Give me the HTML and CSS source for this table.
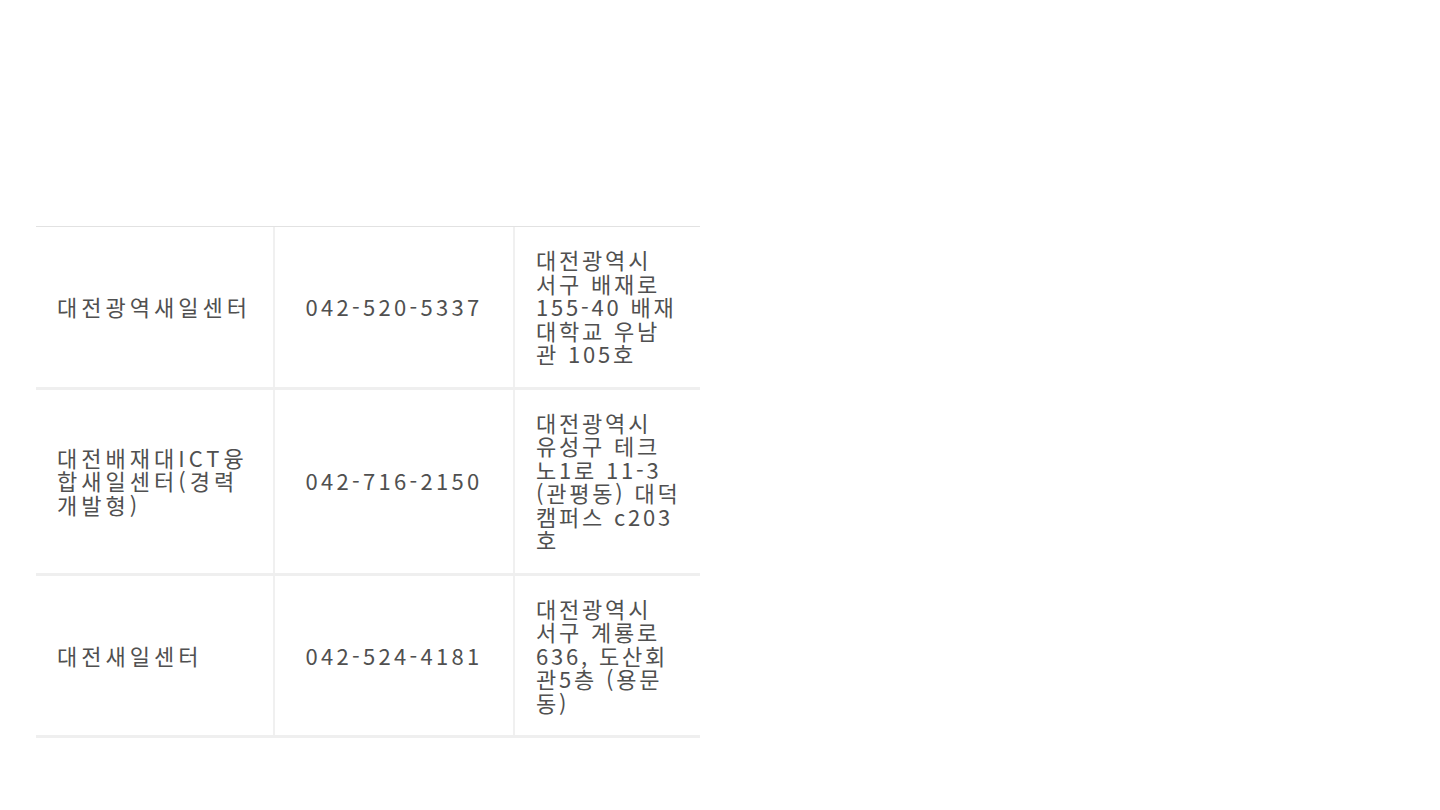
FILE: index.html
```html
<!DOCTYPE html>
<html lang="ko">
<head>
<meta charset="utf-8">
<title>새일센터 안내</title>
<link rel="stylesheet" href="styles.css">
</head>
<body>
<div class="page">
  <div class="center-table">
    <div class="row">
      <div class="cell name">대전광역새일센터</div>
      <div class="cell tel">042-520-5337</div>
      <div class="cell addr">대전광역시<br>서구 배재로<br>155-40 배재<br>대학교 우남<br>관 105호</div>
    </div>
    <div class="row">
      <div class="cell name">대전배재대ICT융<br>합새일센터(경력<br>개발형)</div>
      <div class="cell tel">042-716-2150</div>
      <div class="cell addr">대전광역시<br>유성구 테크<br>노1로 11-3<br>(관평동) 대덕<br>캠퍼스 c203<br>호</div>
    </div>
    <div class="row">
      <div class="cell name">대전새일센터</div>
      <div class="cell tel">042-524-4181</div>
      <div class="cell addr">대전광역시<br>서구 계룡로<br>636, 도산회<br>관5층 (용문<br>동)</div>
    </div>
  </div>
</div>
</body>
</html>
```

FILE: styles.css
```css
html, body {
  margin: 0;
  padding: 0;
  background: #ffffff;
}

.page {
  padding: 226px 0 0 36px;
}

.center-table {
  width: 664px;
  border-top: 1px solid #e2e2e2;
  font-family: "Noto Sans CJK KR", "Noto Sans", sans-serif;
  font-size: 22px;
  line-height: 23.5px;
  color: #505050;
}

.row {
  display: grid;
  grid-template-columns: 237px 240px 187px;
  border-bottom: 3px solid #efefef;
}

.cell {
  display: flex;
  align-items: center;
  padding: 21px 0 21px 21px;
  white-space: nowrap;
  overflow: hidden;
  letter-spacing: 4px;
}

.cell + .cell {
  border-left: 2px solid #f0f0f0;
}

.tel {
  justify-content: center;
  padding-left: 0;
  letter-spacing: 3.3px;
}

.addr {
  padding-left: 21px;
  letter-spacing: 2.8px;
}
```
